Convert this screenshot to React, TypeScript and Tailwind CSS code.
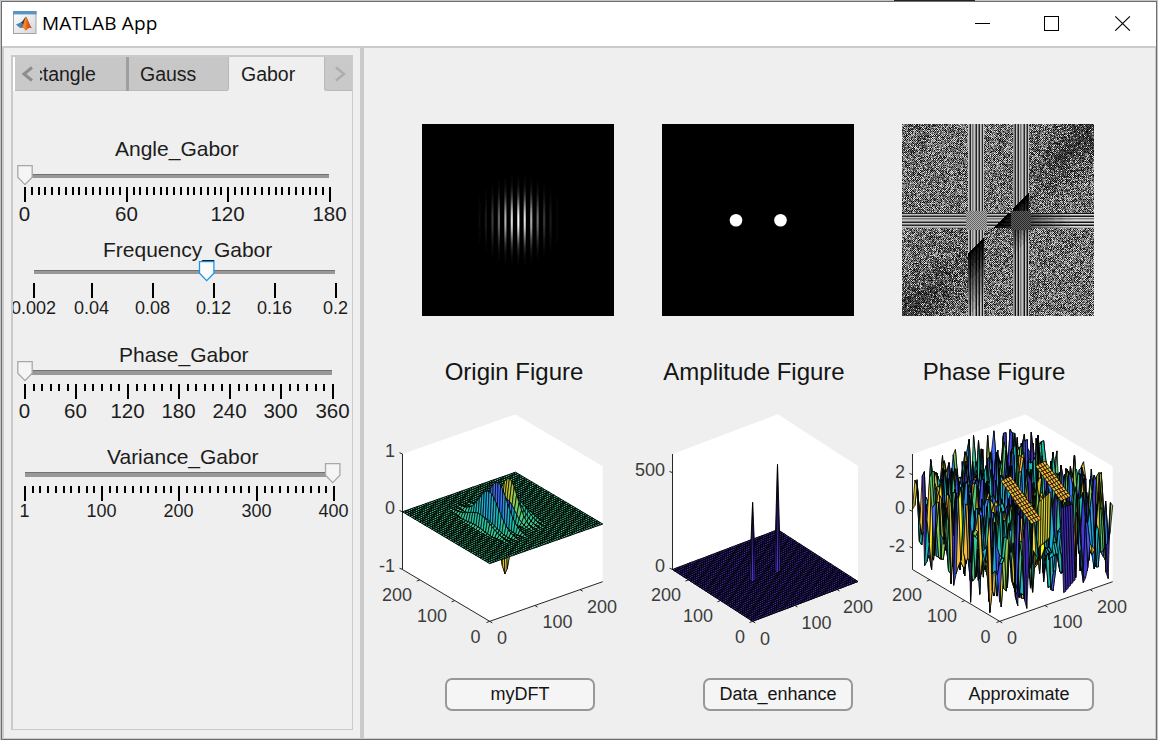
import React from "react";

type Pt = [number, number];

function rng(seed: number) {
  let a = seed;
  return () => {
    a = (a + 0x6d2b79f5) | 0;
    let t = Math.imul(a ^ (a >>> 15), 1 | a);
    t = (t + Math.imul(t ^ (t >>> 7), 61 | t)) ^ t;
    return ((t ^ (t >>> 14)) >>> 0) / 4294967296;
  };
}

const clamp = (v: number, lo = 0, hi = 1) => Math.max(lo, Math.min(hi, v));

/* ---------- grey-scale images ---------- */

const SIZE = 192;

function grayPaths(f: (x: number, y: number) => number, levels: number) {
  const paths: string[] = Array(levels).fill("");
  for (let y = 0; y < SIZE; y++) {
    let start = 0;
    let cur = -1;
    for (let x = 0; x <= SIZE; x++) {
      const q = x < SIZE ? Math.round(clamp(f(x, y)) * (levels - 1)) : -2;
      if (q !== cur) {
        if (cur > 0) paths[cur] += `M${start} ${y}h${x - start}v1h${start - x}z`;
        cur = q;
        start = x;
      }
    }
  }
  return paths;
}

function GrayImage({ paths }: { paths: string[] }) {
  return (
    <svg width="192" height="192" viewBox="0 0 192 192" shapeRendering="crispEdges" className="block bg-black">
      {paths.map((d, i) => {
        if (!d) return null;
        const g = Math.round((i / (paths.length - 1)) * 255);
        return <path key={i} d={d} fill={`rgb(${g},${g},${g})`} />;
      })}
    </svg>
  );
}

const gaborPaths = grayPaths((x, y) => {
  const u = (x - 95.8) / 0.75;
  const v = (y - 96) / 0.75;
  const e = Math.exp(-(u * u + v * v) / 800);
  return e * Math.cos(2 * Math.PI * 0.1158 * u);
}, 48);

const phasePaths = (() => {
  const r = rng(11);
  const wave = (n: number) => [1, 0.5, 0, 0.75][n % 4 === 3 && n % 8 === 7 ? 3 : n % 3];
  return grayPaths((x, y) => {
    const v1 = x >= 66 && x < 82;
    const v2 = x >= 111 && x < 127;
    const h = y >= 89 && y < 104;
    const c1 = x >= 64 && x < 85 && y >= 87 && y < 106;
    const c2 = x >= 109 && x < 129 && y >= 87 && y < 106;
    const s = x + y - 194;
    const noise = r();
    const second = r();
    if (c1 || c2) {
      const chk = (x + y) % 2;
      return c1 ? 0.42 + chk * 0.24 : 0.14 + chk * 0.22;
    }
    if (v1) return s > 0 ? clamp(s / 68) * (0.1 + wave(x) * 0.7) : 0.18 + wave(x) * 0.6;
    if (v2) return s > 0 ? clamp((s - 2) / 48) * (0.1 + wave(x) * 0.7) : 0.18 + wave(x) * 0.6;
    if (h) {
      if (x > 82 && x < 111 && s > 0) return clamp(s / 70) * (0.1 + wave(y) * 0.6);
      if (x > 127) return clamp((x - 92) / 80) * (0.1 + wave(y) * 0.76);
      return 0.14 + wave(y) * 0.66;
    }
    const off = Math.abs(s) / 50;
    const far = clamp((Math.abs(x - y) - 40) / 110);
    const corner = clamp((50 - x - y) / 80);
    const dark = clamp(1 - off) * far * 0.8 + corner * 0.4;
    const base = clamp(0.48 + ((x + y) % 2 ? 0.2 : -0.2) + (noise - 0.5) * 0.85);
    return second < dark ? base * 0.4 : base * 0.9;
  }, 14);
})();

/* ---------- surface plots ---------- */

const PARULA: [number, number, number][] = [
  [62, 38, 168], [71, 66, 229], [67, 103, 253], [45, 140, 243], [27, 170, 222],
  [24, 190, 185], [55, 200, 145], [130, 204, 89], [202, 193, 45], [252, 188, 62], [249, 251, 21],
];

function parula(t: number) {
  const p = clamp(t) * 10;
  const i = Math.min(9, Math.floor(p));
  const f = p - i;
  const c = [0, 1, 2].map((k) => Math.round(PARULA[i][k] + (PARULA[i + 1][k] - PARULA[i][k]) * f));
  return `rgb(${c.join(",")})`;
}

interface Frame {
  front: Pt;
  left: Pt;
  right: Pt;
}

const NI = 50;
const NJ = 36;

function project(fr: Frame, i: number, j: number, dz: number): Pt {
  return [
    fr.front[0] + ((fr.right[0] - fr.front[0]) * i) / NI + ((fr.left[0] - fr.front[0]) * j) / NJ,
    fr.front[1] + ((fr.right[1] - fr.front[1]) * i) / NI + ((fr.left[1] - fr.front[1]) * j) / NJ - dz,
  ];
}

const poly = (pts: Pt[]) => "M" + pts.map((p) => `${p[0].toFixed(1)} ${p[1].toFixed(1)}`).join("L") + "z";

function Surface({
  frame, height, color, stroke,
}: {
  frame: Frame;
  height: (i: number, j: number) => number;
  color: (i: number, j: number) => string;
  stroke: number;
}) {
  const cells: React.ReactNode[] = [];
  for (let j = NJ - 1; j >= 0; j--) {
    for (let i = NI - 1; i >= 0; i--) {
      const z = [height(i, j), height(i + 1, j), height(i + 1, j + 1), height(i, j + 1)];
      const d = poly([
        project(frame, i, j, z[0]),
        project(frame, i + 1, j, z[1]),
        project(frame, i + 1, j + 1, z[2]),
        project(frame, i, j + 1, z[3]),
      ]);
      const steep = Math.max(...z) - Math.min(...z) > 6;
      cells.push(
        <path key={j * NI + i} d={d} fill={color(i, j)} strokeWidth={steep ? stroke * 0.75 : stroke} />
      );
    }
  }
  return <g stroke="#000" strokeLinejoin="bevel">{cells}</g>;
}

interface Label {
  x: number;
  y: number;
  t: string;
}

function Plot({
  x, width, frame, zticks, labels, children,
}: {
  x: number;
  width: number;
  frame: Frame;
  zticks: number[];
  labels: Label[];
  children: React.ReactNode;
}) {
  const { front, left, right } = frame;
  const back: Pt = [left[0] + right[0] - front[0], left[1] + right[1] - front[1]];
  const h = 115.5;
  const tick = (f: number, end: Pt): Pt => [front[0] + (end[0] - front[0]) * f, front[1] + (end[1] - front[1]) * f];
  return (
    <svg width={width} height="260" viewBox={`${x} 400 ${width} 260`} className="block">
      <path
        fill="#fff"
        d={poly([front, right, [right[0], right[1] - h], [back[0], back[1] - h], [left[0], left[1] - h], left])}
      />
      <g stroke="#262626" strokeWidth="1" fill="none">
        <path d={`M${left[0]} ${left[1] - h}V${left[1]}L${front[0]} ${front[1]}L${right[0]} ${right[1]}`} />
        {zticks.map((z) => <path key={z} d={`M${left[0]} ${z}l-3 -1.3`} />)}
        {[0, 0.4, 0.8].map((f) => {
          const a = tick(f, right);
          const b = tick(f, left);
          return <path key={f} d={`M${a[0]} ${a[1]}l2.6 1.6M${b[0]} ${b[1]}l-3.2 1.2`} />;
        })}
      </g>
      {children}
      <g fill="#3c3c3c" fontSize="18" textAnchor="middle">
        {labels.map((l, i) => <text key={i} x={l.x} y={l.y}>{l.t}</text>)}
      </g>
    </svg>
  );
}

const frameA: Frame = { front: [489.7, 621.3], left: [402.5, 569.5], right: [602.7, 581.7] };
const frameB: Frame = { front: [752.7, 621.3], left: [672.5, 569.5], right: [858, 581.5] };
const frameC: Frame = { front: [999.7, 621.3], left: [912.5, 569.5], right: [1112.7, 581.7] };

/* amplitude and half-width (in cells) of every column that the packet reaches */
const RIDGES: Record<number, [number, number]> = {
  13: [0.04, 3], 14: [-0.1, 4], 15: [0.2, 4.4], 16: [-0.1, 4], 17: [0.12, 4], 18: [-0.34, 4], 19: [0.54, 4],
  20: [-0.1, 3], 21: [0.15, 3], 22: [-0.66, 3.8], 23: [0.64, 3.8], 24: [-0.1, 2], 25: [0.4, 2.2],
  26: [-0.98, 2], 27: [0.3, 3], 28: [0.64, 3.4], 29: [-0.05, 3], 30: [0.3, 3.8], 31: [-0.14, 3],
  32: [0.22, 3.8], 33: [-0.05, 3], 34: [0.1, 3.6],
};

function gaborZ(i: number, j: number) {
  const ridge = RIDGES[i];
  if (!ridge) return 0;
  const dy = j - NJ / 2;
  return ridge[0] * Math.exp(-(dy * dy) / (2 * ridge[1] * ridge[1]));
}

const phaseZ = (() => {
  const r = rng(77);
  const z: number[][] = [];
  for (let j = 0; j <= NJ; j++) {
    z.push([]);
    for (let i = 0; i <= NI; i++) {
      let v: number;
      const pick = r();
      if (i > 0 && pick < 0.12) v = z[j][i - 1] + (r() - 0.5) * 0.7;
      else if (j > 0 && pick < 0.24) v = z[j - 1][i] + (r() - 0.5) * 0.7;
      else if (pick < 0.36) v = (r() < 0.5 ? -1 : 1) * (2.3 + r() * 0.8);
      else v = (r() * 2 - 1) * 2.3;
      if (j < 4 && i > 15 && i < 32) v = Math.max(v, -1.1 + r());
      z[j].push(clamp(v, -3.1, 3.1));
    }
  }
  return z;
})();

function Band({ x0, y0, x1, y1, n }: { x0: number; y0: number; x1: number; y1: number; n: number }) {
  const cells: React.ReactNode[] = [];
  const dx = (x1 - x0) / n;
  const dy = (y1 - y0) / n;
  for (let k = 0; k < n; k++) {
    for (let m = 3; m >= 0; m--) {
      const px = x0 + dx * k + m * 2.4;
      const py = y0 + dy * k - m * 1.2;
      cells.push(
        <path
          key={`${k}-${m}`}
          d={`M${px} ${py}l2.4 -1.2l${dx} ${dy}l-2.4 1.2z`}
          fill={(k + m) % 4 === 0 ? "#e2c82f" : "#f5b23d"}
        />
      );
    }
  }
  return <g stroke="#000" strokeWidth="0.7">{cells}</g>;
}

/* ---------- sliders ---------- */

interface SliderProps {
  title: string;
  indent: string;
  top: number;
  track: [number, number, number, number];
  thumb: [number, number];
  tickY: number;
  minorH: number;
  majors: [number, string][];
  minors: number;
  labelY: number;
  fontSize: number;
  active?: boolean;
}

function Slider(p: SliderProps) {
  const ticks: number[] = [];
  if (p.minors > 0) {
    for (let m = 0; m < p.majors.length - 1; m++) {
      const a = p.majors[m][0];
      const b = p.majors[m + 1][0];
      for (let k = 1; k < p.minors; k++) ticks.push(Math.round(a + ((b - a) * k) / p.minors));
    }
  }
  const [tx, ty, tw, th] = p.track;
  const [cx, cy] = p.thumb;
  return (
    <div>
      <div className={`${p.indent} h-6 text-[21px] leading-6 whitespace-nowrap text-[#1c1c1c]`}>{p.title}</div>
      <svg width="339" height="70" viewBox={`13 ${p.top} 339 70`} className="block overflow-visible">
        <rect x={tx} y={ty} width={tw} height={th} fill="#989898" />
        <rect x={tx} y={ty} width={tw} height="1" fill="#727272" />
        <g shapeRendering="crispEdges" fill="#000">
          {ticks.map((x) => <rect key={x} x={x - 1} y={p.tickY} width="2" height={p.minorH} />)}
          {p.majors.map(([x]) => <rect key={x} x={x - 1} y={p.tickY} width="2" height="15" />)}
        </g>
        <path
          d={`M${cx - 7.2} ${cy + 0.6}h14.4v11.6l-7.2 7.4l-7.2 -7.4z`}
          fill={p.active ? "#fcfcfc" : "#f5f5f5"}
          stroke={p.active ? "#1696f0" : "#a8a8a8"}
          strokeWidth="1.3"
        />
        <g fill="#1c1c1c" textAnchor="middle" fontSize={p.fontSize}>
          {p.majors.map(([x, t]) => <text key={t} x={x - 0.5} y={p.labelY}>{t}</text>)}
        </g>
      </svg>
    </div>
  );
}

function AppIcon() {
  return (
    <svg width="24" height="24" viewBox="0 0 24 24" className="block">
      <defs>
        <linearGradient id="ml" x1="0" x2="1" y1="0" y2="0">
          <stop offset="0" stopColor="#8e2a1a" />
          <stop offset="0.5" stopColor="#e4681e" />
          <stop offset="1" stopColor="#b8391a" />
        </linearGradient>
        <linearGradient id="bg" x1="0" x2="1" y1="0" y2="1">
          <stop offset="0" stopColor="#fff" />
          <stop offset="1" stopColor="#d4d6da" />
        </linearGradient>
      </defs>
      <rect x="0.5" y="0.5" width="22.5" height="22" fill="url(#bg)" stroke="#a3a3a3" />
      <rect x="0" y="0" width="23.5" height="3.4" fill="#5b94c2" />
      <path d="M3 13.6L7.6 11.6L10 13.8L7 17z" fill="#3f86c4" />
      <path d="M7.6 11.6C9.6 11 10.6 8 13 5.6L11 14.6L8.6 16.4L7 17L10 13.8z" fill="#23455f" />
      <path d="M13 5.4C14.6 7 16.4 13.6 19.4 17.8C17.6 16.2 15.6 16.2 12.8 19.8C11.6 17.4 10.2 16 7.4 16.8C10.6 14.6 11.2 8.4 13 5.4z" fill="url(#ml)" />
      <path d="M13 5.4C14 9.4 12.6 14.6 12.8 19.8C11.9 17.4 10.2 16 8.4 16.6C11 14.4 11.4 8.4 13 5.4z" fill="#f08a24" />
    </svg>
  );
}

function PlotButton({ children }: { children: React.ReactNode }) {
  return (
    <button className="flex h-[33px] w-[150px] items-center justify-center rounded-[7px] border-2 border-[#989898] bg-[#f5f5f5] pb-[2px] text-[18px] leading-5 text-[#141414]">
      {children}
    </button>
  );
}

function axisLabels(dx: number): Label[] {
  return [
    { x: 397 + dx, y: 600.5, t: "200" },
    { x: 432 + dx, y: 622, t: "100" },
    { x: 475.5 + dx, y: 643, t: "0" },
    { x: 502 + dx, y: 643.5, t: "0" },
    { x: 557.5 + dx, y: 627.5, t: "100" },
    { x: 602 + dx, y: 613, t: "200" },
  ];
}

export default function App() {
  return (
    <div className="flex h-[740px] w-[1158px] flex-col overflow-hidden bg-[#c4c4c4] font-['Liberation_Sans',Arial,sans-serif]">
      <div className="flex h-px shrink-0">
        <div className="w-[894px]" />
        <div className="w-[81px] bg-[#222]" />
      </div>
      <div className="ml-px flex h-[739px] w-[1156px] flex-col border border-[#6e6e6e] bg-[#efefef]">
        <div className="flex h-11 shrink-0 items-center bg-white">
          <div className="ml-[11px] pb-[2px]"><AppIcon /></div>
          <div className="ml-[5px] pb-[2px] font-['Open_Sans','Noto_Sans',sans-serif] text-[19px] tracking-[0.15px] text-black">MATLAB App</div>
          <svg width="157" height="16" viewBox="974 15 157 16" className="mr-[25px] mb-[2px] ml-auto block" fill="none" stroke="#000">
            <path d="M975 23.5h15" />
            <rect x="1044.5" y="16.5" width="14" height="14" />
            <path d="M1115.3 16.3l14.6 14.4M1129.9 16.3l-14.6 14.4" strokeWidth="1.1" />
          </svg>
        </div>
        <div className="flex min-h-0 flex-1 border-t-2 border-r border-b border-l-2 border-[#cbcbcb]">
          <div className="w-[356px] shrink-0 pt-[7px] pl-[7px]">
            <div className="h-[675px] w-[342px] overflow-hidden border border-t-2 border-l-2 border-[#cacaca]">
              <div className="flex h-[34px] bg-[#efefef] text-[19.5px] leading-none text-[#1c1c1c]">
                <div className="w-[2px] bg-white" />
                <div className="flex w-[25px] items-center border-b border-[#b9b9b9] bg-[#c9c9c9] pl-[6px]">
                  <svg width="13" height="16" viewBox="0 0 13 16" fill="none" stroke="#8d8d8d" strokeWidth="3">
                    <path d="M11 1.5L3 8L11 14.5" />
                  </svg>
                </div>
                <div className="flex w-[86px] items-center overflow-hidden border-b border-[#b9b9b9] bg-[#c7c7c7] pt-[3px]">
                  <span className="-ml-[7px]">ctangle</span>
                </div>
                <div className="w-[3px] bg-[#9f9f9f]" />
                <div className="flex w-[100px] items-center rounded-br-[3px] border-r border-b border-[#b9b9b9] bg-[#c7c7c7] pt-[3px] pl-[11px]">Gauss</div>
                <div className="flex w-[95px] items-center bg-[#efefef] pt-px pl-3">Gabor</div>
                <div className="flex w-[28px] items-center rounded-bl-[3px] border-b border-l border-[#b9b9b9] bg-[#c9c9c9] pl-[9px]">
                  <svg width="13" height="16" viewBox="0 0 13 16" fill="none" stroke="#adadad" strokeWidth="2.4">
                    <path d="M2 1.5L10 8L2 14.5" />
                  </svg>
                </div>
              </div>
              <div className="flex flex-col pt-[46px]">
                <Slider
                  title="Angle_Gabor" indent="pl-[102px]" top={161}
                  track={[25, 174, 304, 4]} thumb={[25, 165]} tickY={187} minorH={8}
                  majors={[[25, "0"], [127, "60"], [228, "120"], [330, "180"]]} minors={15}
                  labelY={221} fontSize={20.5}
                />
                <div className="mt-[7px]">
                  <Slider
                    title="Frequency_Gabor" indent="pl-[90px]" top={262}
                    track={[34, 270, 301, 4]} thumb={[206.7, 261]} tickY={283} minorH={0}
                    majors={[[34, "0.002"], [92, "0.04"], [153, "0.08"], [214, "0.12"], [275, "0.16"], [336, "0.2"]]} minors={0}
                    labelY={314} fontSize={18} active
                  />
                </div>
                <div className="mt-[11px]">
                  <Slider
                    title="Phase_Gabor" indent="pl-[106px]" top={367}
                    track={[25, 370, 307, 5]} thumb={[25, 361]} tickY={384} minorH={7}
                    majors={[[25, "0"], [76, "60"], [128, "120"], [179, "180"], [230, "240"], [281, "300"], [333, "360"]]} minors={6}
                    labelY={418} fontSize={20.5}
                  />
                </div>
                <div className="mt-2">
                  <Slider
                    title="Variance_Gabor" indent="pl-[94px]" top={469}
                    track={[25, 472, 308, 5]} thumb={[332.7, 463]} tickY={486} minorH={7}
                    majors={[[25, "1"], [102, "100"], [179, "200"], [257, "300"], [334, "400"]]} minors={10}
                    labelY={517} fontSize={18}
                  />
                </div>
              </div>
            </div>
          </div>
          <div className="w-1 shrink-0 bg-[#cacaca]" />
          <div className="flex min-w-0 flex-1 flex-col pt-[76px]">
            <div className="flex gap-12 pl-[58px]">
              <GrayImage paths={gaborPaths} />
              <svg width="192" height="192" viewBox="662 124 192 192" className="block bg-black">
                <circle cx="736" cy="220.3" r="6.3" fill="#fff" />
                <circle cx="780.5" cy="220.3" r="6.3" fill="#fff" />
              </svg>
              <GrayImage paths={phasePaths} />
            </div>
            <div className="mt-10 flex gap-12 pl-[54px] text-center text-[24px] leading-8 whitespace-nowrap text-[#141414]">
              <div className="w-[192px]">Origin Figure</div>
              <div className="w-[192px]">Amplitude Figure</div>
              <div className="w-[192px]">Phase Figure</div>
            </div>
            <div className="mt-3 flex pl-[10px]">
              <Plot
                x={374} width={260} frame={frameA} zticks={[454, 511.8, 569.5]}
                labels={[
                  { x: 390, y: 457, t: "1" }, { x: 390, y: 514, t: "0" }, { x: 387, y: 572, t: "-1" },
                  ...axisLabels(0),
                ]}
              >
                <Surface
                  frame={frameA}
                  height={(i, j) => 57.7 + 57.7 * gaborZ(i, j)}
                  color={(i, j) => parula((gaborZ(i, j) + 1) / 1.65)}
                  stroke={1}
                />
              </Plot>
              <Plot
                x={634} width={250} frame={frameB} zticks={[472.7, 569.5]}
                labels={[
                  { x: 650, y: 475.5, t: "500" }, { x: 660, y: 571.5, t: "0" },
                  { x: 666, y: 600.5, t: "200" }, { x: 698, y: 622, t: "100" }, { x: 740, y: 643, t: "0" },
                  { x: 765, y: 644.5, t: "0" }, { x: 816.5, y: 628.5, t: "100" }, { x: 858, y: 613, t: "200" },
                ]}
              >
                <Surface frame={frameB} height={() => 0} color={() => "#432ab8"} stroke={1} />
                <g stroke="#000" strokeWidth="0.9" strokeLinejoin="bevel">
                  <path d="M774.3 571L777.5 464.5L780.8 570.6L778.4 572.2z" fill="#3e26a8" />
                  <path d="M776 572L777.5 464.5L778.6 572" fill="#4a32c8" />
                  <path d="M749.3 580L752.6 502.5L756 579.6L753.4 581.4z" fill="#3e26a8" />
                  <path d="M751.2 581L752.6 502.5L754 581" fill="#4a32c8" />
                </g>
              </Plot>
              <Plot
                x={884} width={260} frame={frameC} zticks={[474.7, 511.3, 548]}
                labels={[
                  { x: 900, y: 478, t: "2" }, { x: 900, y: 514, t: "0" }, { x: 897, y: 551.5, t: "-2" },
                  ...axisLabels(510),
                ]}
              >
                <Surface
                  frame={frameC}
                  height={(i, j) => 57.7 + phaseZ[j][i] * 18.4}
                  color={(i, j) => parula((phaseZ[j][i] + 2.8) / 5.6)}
                  stroke={1.05}
                />
                <g stroke="#000" strokeWidth="0.8" fill="#3f2bb4">
                  {[0, 1, 2, 3, 4].map((k) => (
                    <path key={k} d={`M${1061 + k * 2.3} ${508 - k * 0.8}l2.3 -0.8l2.6 ${84 - k * 2}l-2.3 1.5z`} />
                  ))}
                </g>
                <g stroke="#000" strokeWidth="0.7" fill="#d9d42c">
                  {[0, 1, 2, 3, 4].map((k) => (
                    <path key={k} d={`M${1039 + k * 2.3} ${502 - k * 2}l2.3 -2l-1 45l-2.3 4z`} />
                  ))}
                </g>
                <Band x0={1001} y0={481} x1={1031.5} y1={524} n={13} />
                <Band x0={1035.5} y0={466} x1={1061} y1={501} n={11} />
              </Plot>
            </div>
            <div className="mt-[18px] flex pl-[81px]">
              <PlotButton>myDFT</PlotButton>
              <div className="w-[108px]" />
              <PlotButton>Data_enhance</PlotButton>
              <div className="w-[91px]" />
              <PlotButton>Approximate</PlotButton>
            </div>
          </div>
        </div>
      </div>
    </div>
  );
}
